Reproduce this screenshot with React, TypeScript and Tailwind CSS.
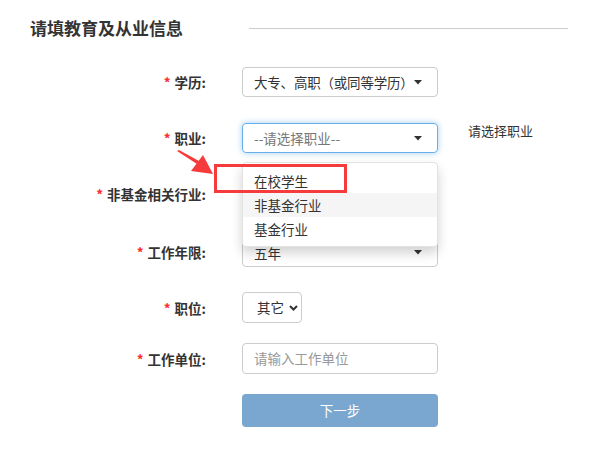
import React from "react";

const Caret = () => (
  <svg width="8" height="5" viewBox="0 0 8 5" className="block">
    <polygon points="0,0 8,0 4,4.5" fill="#333" />
  </svg>
);

const Label = ({ text }: { text: string }) => (
  <div className="w-[206px] shrink-0 text-right font-bold text-[13.5px] leading-[18px] text-[#333] whitespace-nowrap">
    <span className="text-[#ff2a2a] mr-[4px]">*</span>
    {text}:
  </div>
);

export default function App() {
  return (
    <div className="relative w-[589px] h-[451px] bg-white text-[#333] font-['Noto_Sans_CJK_SC','Noto_Sans',sans-serif] overflow-hidden">
      {/* Title */}
      <div className="flex items-center pt-[17px] h-[39px]">
        <div className="pl-[30px] text-[17px] leading-[22px] font-bold text-[#333] whitespace-nowrap">
          请填教育及从业信息
        </div>
        <div className="ml-[66px] w-[319px] h-px bg-[#cccccc]" />
      </div>

      {/* Row 1 */}
      <div className="flex items-center mt-[28px] h-[30px]">
        <Label text="学历" />
        <div className="ml-[36px] w-[196px] h-[30px] border border-[#cccccc] rounded-[4px] flex items-center justify-between pl-[11px] pr-[15px] text-[13.5px]">
          <span className="whitespace-nowrap tracking-[-0.2px]">大专、高职（或同等学历）</span>
          <Caret />
        </div>
      </div>

      {/* Row 2 */}
      <div className="flex items-center mt-[26px] h-[30px]">
        <Label text="职业" />
        <div className="ml-[36px] w-[196px] h-[30px] border border-[#66afe9] rounded-[4px] shadow-[0_0_6px_rgba(102,175,233,0.6)] flex items-center justify-between pl-[11px] pr-[15px] text-[13.5px] text-[#777]">
          <span className="whitespace-nowrap">--请选择职业--</span>
          <Caret />
        </div>
        <div className="self-start -mt-[1px] ml-[30px] text-[13px] leading-[18px] text-[#333] whitespace-nowrap">
          请选择职业
        </div>
      </div>

      {/* Row 3 (select hidden beneath the open menu) */}
      <div className="flex items-center mt-[26px] h-[30px]">
        <Label text="非基金相关行业" />
        <div className="ml-[36px] w-[196px] h-[30px] border border-[#cccccc] rounded-[4px] flex items-center justify-end pr-[15px]">
          <Caret />
        </div>
      </div>

      {/* Row 4 */}
      <div className="flex items-center mt-[28px] h-[30px]">
        <Label text="工作年限" />
        <div className="ml-[36px] w-[196px] h-[30px] border border-[#cccccc] rounded-[4px] flex items-center justify-between pl-[11px] pr-[15px] text-[13.5px]">
          <span className="whitespace-nowrap mt-[2px]">五年</span>
          <Caret />
        </div>
      </div>

      {/* Row 5 */}
      <div className="flex items-center mt-[25px] h-[31px]">
        <Label text="职位" />
        <div className="ml-[36px] w-[60px] h-[31px] border border-[#cccccc] rounded-[4px] flex items-center pl-[14px] text-[13.5px]">
          <span className="whitespace-nowrap">其它</span>
          <svg width="9" height="6" viewBox="0 0 9 6" className="ml-[5px]">
            <polyline points="1,1 4.5,4.5 8,1" fill="none" stroke="#333" strokeWidth="2" />
          </svg>
        </div>
      </div>

      {/* Row 6 */}
      <div className="flex items-center mt-[20px] h-[31px]">
        <Label text="工作单位" />
        <div className="ml-[36px] w-[196px] h-[31px] border border-[#cccccc] rounded-[4px] flex items-center pl-[11px] text-[13.5px] text-[#999]">
          <span className="whitespace-nowrap">请输入工作单位</span>
        </div>
      </div>

      {/* Button */}
      <div className="flex mt-[20px]">
        <div className="ml-[242px] w-[196px] h-[33px] rounded-[4px] bg-[#79a7cf] text-white text-[13.5px] flex items-center justify-center">
          下一步
        </div>
      </div>

      {/* Dropdown menu overlay */}
      <div className="absolute left-[242px] top-[162px] w-[196px] border border-[#e2e2e2] rounded-[4px] bg-white shadow-[0_6px_12px_rgba(0,0,0,0.175)] pt-[6px] pb-[5px] text-[13.5px] text-[#333]">
        <div className="h-[24px] flex items-center pl-[11px]">在校学生</div>
        <div className="h-[24px] flex items-center pl-[11px] bg-[#f5f5f5]">非基金行业</div>
        <div className="h-[24px] flex items-center pl-[11px]">基金行业</div>
      </div>

      {/* Red highlight box */}
      <div className="absolute left-[214px] top-[164px] w-[133px] h-[29px] border-[3px] border-[#f53b3b]" />

      {/* Red arrow */}
      <svg className="absolute left-0 top-0" width="589" height="451" viewBox="0 0 589 451" style={{ pointerEvents: "none" }}>
        <polygon points="177,151 179,150 199,161 197,164" fill="#f53b3b" />
        <polygon points="191,171 203,155 213,174" fill="#f53b3b" />
      </svg>
    </div>
  );
}
